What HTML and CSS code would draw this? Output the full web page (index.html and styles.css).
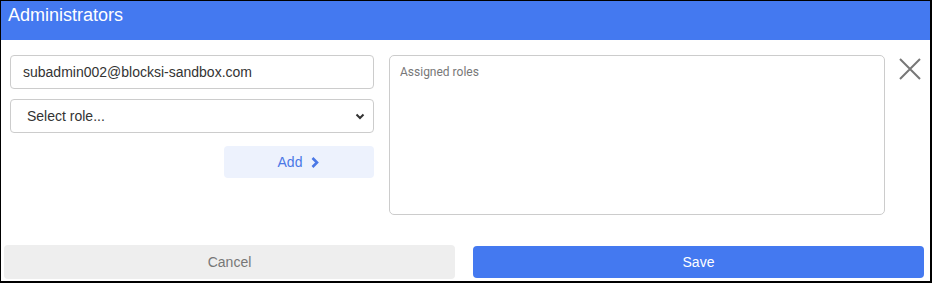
FILE: index.html
```html
<!DOCTYPE html>
<html>
<head>
  <meta charset="UTF-8">
  <title>Administrators</title>
  <link rel="stylesheet" href="styles.css">
</head>
<body>
  <div class="dialog">
    <div class="dialog-header">Administrators</div>
    <div class="dialog-body">
      <div class="left-col">
        <input type="text" class="text-input" value="subadmin002@blocksi-sandbox.com">
        <div class="select-box">
          <span>Select role...</span>
          <svg width="12" height="8" viewBox="0 0 12 8"><path d="M2.5 2.5l3.5 3.5 3.5-3.5" fill="none" stroke="#333" stroke-width="2"/></svg>
        </div>
        <div class="add-row">
          <button class="add-btn">Add <svg width="10" height="13" viewBox="0 0 10 13"><path d="M2.5 2l4.5 4.5-4.5 4.5" fill="none" stroke="#4a78e6" stroke-width="2.6"/></svg></button>
        </div>
      </div>
      <div class="roles-box">Assigned roles</div>
      <div class="close-btn">
        <svg width="22" height="22" viewBox="0 0 22 22"><path d="M1 1l20 20M21 1L1 21" stroke="#777" stroke-width="2"/></svg>
      </div>
    </div>
    <div class="dialog-footer">
      <button class="cancel-btn">Cancel</button>
      <button class="save-btn">Save</button>
    </div>
  </div>
</body>
</html>
```

FILE: styles.css
```css
body {
  margin: 0;
  font-family: "Liberation Sans", Arial, sans-serif;
  background: #fff;
}
.dialog {
  width: 932px;
  height: 283px;
  box-sizing: border-box;
  border-style: solid;
  border-color: #000;
  border-width: 1px 2px 2px 1px;
  display: flex;
  flex-direction: column;
}
.dialog-header {
  height: 39px;
  background-color: #4479f0;
  color: #fff;
  font-size: 18px;
  padding: 4px 0 0 7px;
  box-sizing: border-box;
}
.dialog-body {
  display: flex;
  padding: 15px 0 0 9px;
  height: 191px;
  box-sizing: border-box;
}
.left-col {
  width: 364px;
  display: flex;
  flex-direction: column;
}
.text-input {
  height: 34px;
  margin: 0;
  padding: 0 12px;
  font-family: "Liberation Sans", Arial, sans-serif;
  font-size: 14px;
  color: #333;
  border: 1px solid #ccc;
  border-radius: 4px;
  box-sizing: border-box;
}
.select-box {
  margin-top: 10px;
  height: 34px;
  border: 1px solid #ccc;
  border-radius: 4px;
  box-sizing: border-box;
  display: flex;
  align-items: center;
  justify-content: space-between;
  padding: 0 7px 0 16px;
  font-size: 14px;
  color: #333;
}
.add-row {
  display: flex;
  justify-content: flex-end;
  margin-top: 13px;
}
.add-btn {
  width: 150px;
  height: 32px;
  border: none;
  border-radius: 4px;
  background-color: #edf2fd;
  color: #4a78e6;
  font-family: "Liberation Sans", Arial, sans-serif;
  font-size: 14px;
  display: flex;
  align-items: center;
  justify-content: center;
  gap: 8px;
  padding: 0;
}
.roles-box {
  margin-left: 15px;
  width: 496px;
  height: 160px;
  box-sizing: border-box;
  border: 1px solid #ccc;
  border-radius: 5px;
  padding: 9px 10px;
  font-family: Roboto, sans-serif;
  font-size: 12px;
  color: #777;
}
.close-btn {
  margin: 3px 0 0 14px;
}
.dialog-footer {
  display: flex;
  align-items: center;
  gap: 18px;
  padding: 14px 6px 0 3px;
}
.dialog-footer button {
  flex: 1;
  border: none;
  border-radius: 4px;
  font-family: "Liberation Sans", Arial, sans-serif;
  font-size: 14px;
}
.cancel-btn {
  height: 34px;
  background-color: #eee;
  color: #777;
}
.save-btn {
  height: 32px;
  background-color: #4479f0;
  color: #fff;
}
```
